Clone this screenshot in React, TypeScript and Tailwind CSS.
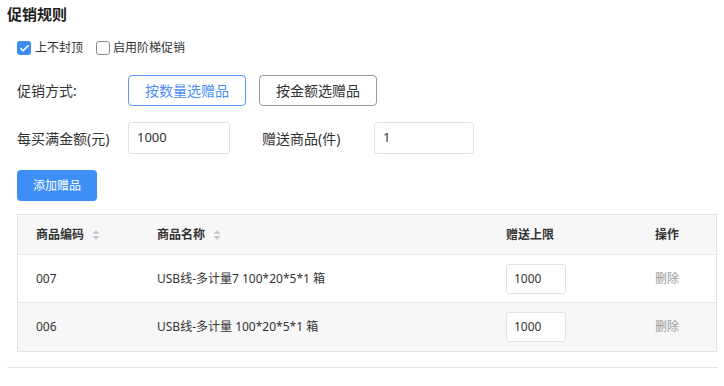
import { Check } from 'lucide-react'

const rows = [
  { code: '007', name: 'USB线-多计量7 100*20*5*1 箱', limit: '1000' },
  { code: '006', name: 'USB线-多计量 100*20*5*1 箱', limit: '1000' },
]

function SortIcon() {
  return (
    <svg width="8" height="12" viewBox="0 0 8 12" className="ml-2 inline-block">
      <path d="M4 1L7.5 5H0.5Z" fill="#c8c8c8" />
      <path d="M4 11L7.5 7H0.5Z" fill="#c8c8c8" />
    </svg>
  )
}

export default function App() {
  return (
    <div
      className="w-[724px] h-[386px] bg-white text-[14px] text-[#333] overflow-hidden"
      style={{ fontFamily: '"Noto Sans", "Noto Sans CJK SC", sans-serif' }}
    >
      <h2 className="pl-[7px] pt-[4px] text-[15px] leading-[20px] font-bold text-[#222]">促销规则</h2>

      {/* checkboxes */}
      <div className="mt-[17px] pl-[17px] flex items-center h-[14px] text-[12px]">
        <span className="w-[14px] h-[14px] rounded-[3px] bg-[#3b8cf5] flex items-center justify-center">
          <Check size={11} strokeWidth={3.5} color="white" />
        </span>
        <span className="ml-[4px]">上不封顶</span>
        <span className="ml-[13px] w-[14px] h-[14px] rounded-[3px] border border-[#888] bg-white" />
        <span className="ml-[3px]">启用阶梯促销</span>
      </div>

      {/* promo type */}
      <div className="mt-[20px] pl-[17px] flex items-center h-[31px]">
        <span className="w-[111px]">促销方式:</span>
        <button className="w-[118px] h-[31px] rounded-[4px] border border-[#5b9bf8] text-[#4b8ef5]">按数量选赠品</button>
        <button className="ml-[13px] w-[118px] h-[31px] rounded-[4px] border border-[#9a9a9a] text-[#333]">按金额选赠品</button>
      </div>

      {/* amount row */}
      <div className="mt-[16px] pl-[17px] flex items-center h-[32px]">
        <span className="w-[111px]">每买满金额(元)</span>
        <div className="w-[102px] h-[32px] rounded-[3px] border border-[#e2e2e2] flex items-center pl-[8px] text-[13px]">1000</div>
        <span className="ml-[32px] w-[112px]">赠送商品(件)</span>
        <div className="w-[100px] h-[32px] rounded-[3px] border border-[#e2e2e2] flex items-center pl-[8px] text-[13px]">1</div>
      </div>

      <div className="mt-[16px] pl-[17px]">
        <button className="w-[80px] h-[31px] rounded-[4px] bg-[#3d8ff7] text-white text-[12px]">添加赠品</button>
      </div>

      {/* table */}
      <div className="mt-[13px] ml-[17px] w-[700px] border border-[#e3e3e3] text-[12px]">
        <div className="flex items-center h-[40px] bg-[#f7f7f7] border-b border-[#e8e8e8] font-bold text-[#333]">
          <div className="w-[121px] pl-[18px] flex items-center">商品编码<SortIcon /></div>
          <div className="w-[348px] pl-[18px] flex items-center">商品名称<SortIcon /></div>
          <div className="w-[150px] pl-[19px]">赠送上限</div>
          <div className="flex-1 pl-[18px]">操作</div>
        </div>
        {rows.map((r, i) => (
          <div
            key={r.code}
            className={`flex items-center h-[48px] ${i === 0 ? 'bg-white border-b border-[#e8e8e8]' : 'bg-[#f7f7f7]'}`}
          >
            <div className="w-[121px] pl-[18px]">{r.code}</div>
            <div className="w-[348px] pl-[18px]">{r.name}</div>
            <div className="w-[150px] pl-[19px]">
              <div className="w-[60px] h-[30px] rounded-[3px] border border-[#e2e2e2] bg-white flex items-center pl-[7px]">{r.limit}</div>
            </div>
            <div className="flex-1 pl-[18px] text-[#999]">删除</div>
          </div>
        ))}
      </div>

      <div className="mt-[15px] ml-[7px] w-[711px] border-t border-[#e3e3e3]" />
    </div>
  )
}
